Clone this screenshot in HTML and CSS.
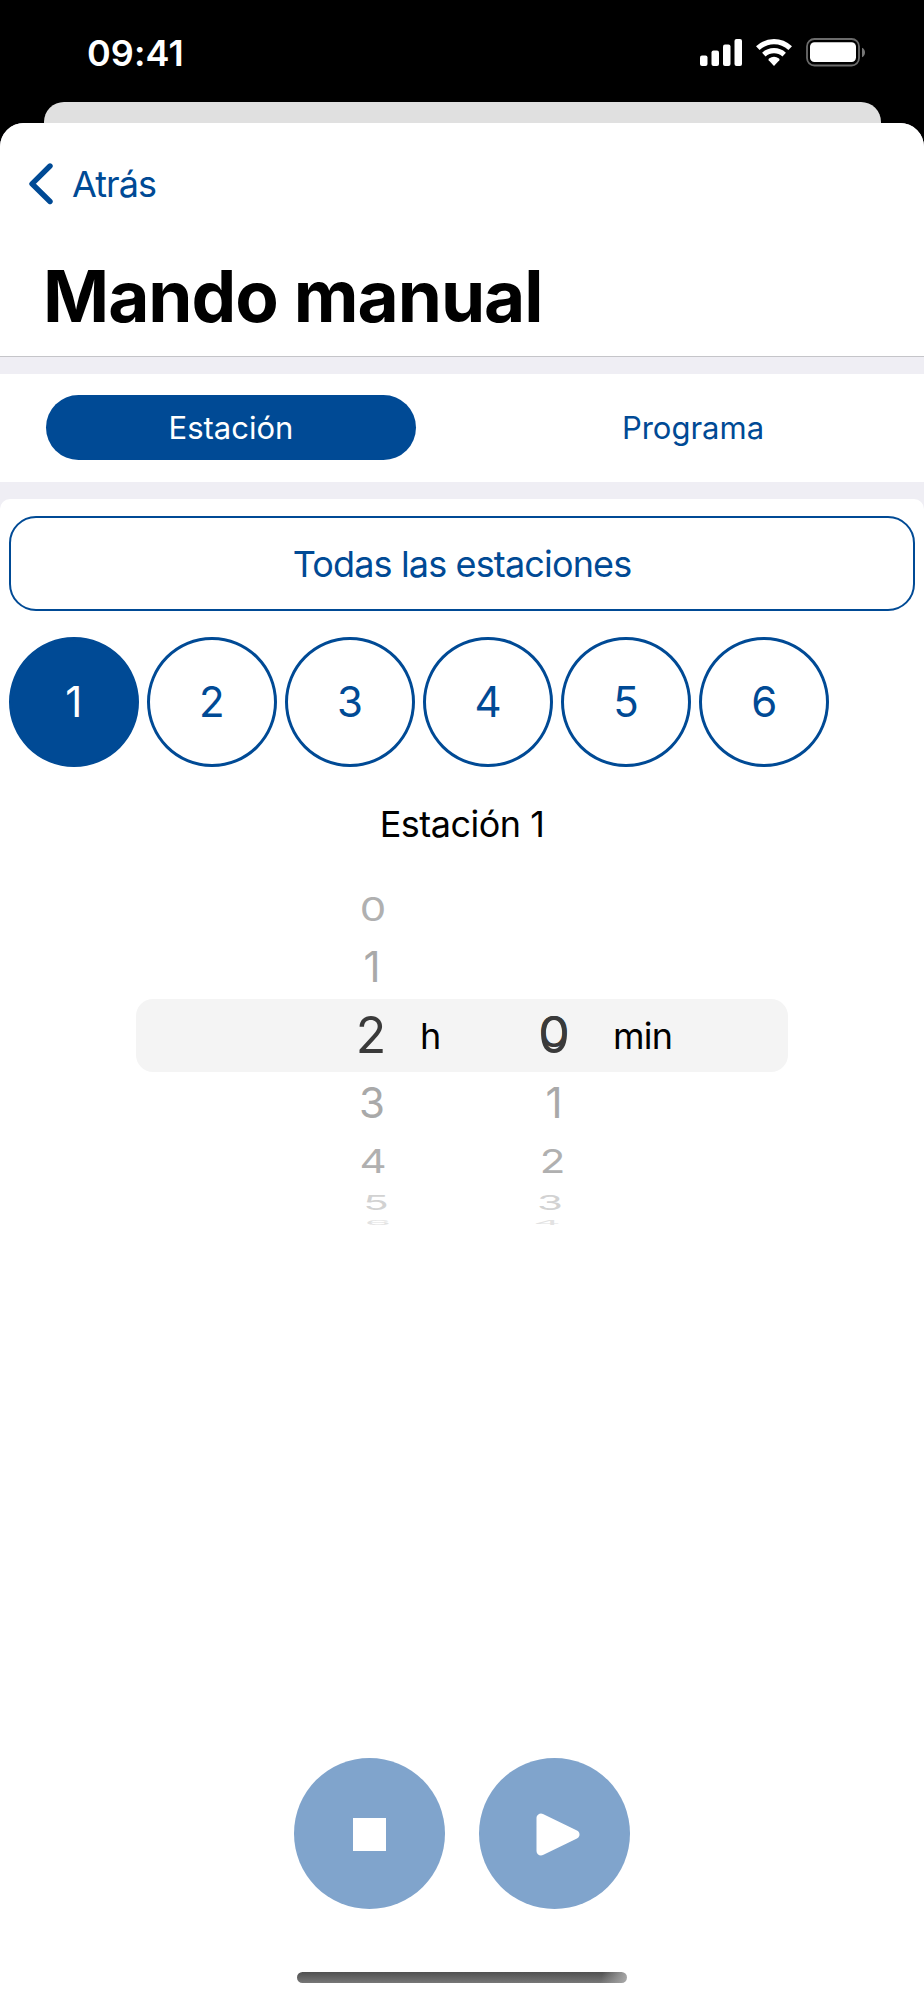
FILE: index.html
```html
<!DOCTYPE html>
<html lang="es">
<head>
  <meta charset="UTF-8">
  <title>Mando manual</title>
  <meta name="viewport" content="width=device-width, initial-scale=1.0">
  <link rel="stylesheet" href="styles.css">
</head>
<body>
  <div class="status-bar">
    <span class="time">09:41</span>
    <svg class="status-icons" width="168" height="32" viewBox="0 0 168 32">
      <g fill="#fff">
        <rect x="0" y="18.5" width="7.5" height="10.5" rx="2"/>
        <rect x="11.5" y="13.5" width="7.5" height="15.5" rx="2"/>
        <rect x="23" y="7.5" width="7.5" height="21.5" rx="2"/>
        <rect x="34.5" y="2" width="7.5" height="27" rx="2"/>
        <path d="M74 29l-5.3-5.8q-.7-.9.3-1.7 5-3.3 10 0 1 .8.3 1.7z"/>
      </g>
      <g fill="none" stroke="#fff" stroke-width="5.2">
        <path d="M57.8 11.2C67.2 2.4 80.8 2.4 90.2 11.2"/>
        <path d="M63.8 17.6C69.8 12.3 78.2 12.3 84.2 17.6"/>
      </g>
      <rect x="107" y="2" width="52" height="26.5" rx="7.5" fill="none" stroke="#6b6b6b" stroke-width="1.8"/>
      <rect x="110" y="5.3" width="46" height="19.7" rx="4.5" fill="#fff"/>
      <path d="M162 10.8q3 1.4 3 4.7t-3 4.7z" fill="#777"/>
    </svg>
  </div>

  <div class="back-sheet"></div>

  <div class="sheet">
    <div class="header">
      <a class="back" href="#">
        <svg width="26" height="42" viewBox="0 0 26 42">
          <path d="M22 3L4 20.8 22 38.5" fill="none" stroke="#004a95" stroke-width="5.4" stroke-linecap="round" stroke-linejoin="round"/>
        </svg>
        <span>Atrás</span>
      </a>
      <h1>Mando manual</h1>
    </div>

    <div class="tabs">
      <div class="tab"><button class="active">Estación</button></div>
      <div class="tab"><button>Programa</button></div>
    </div>

    <div class="panel">
      <button class="all-stations">Todas las estaciones</button>

      <div class="stations">
        <button class="station active">1</button>
        <button class="station">2</button>
        <button class="station">3</button>
        <button class="station">4</button>
        <button class="station">5</button>
        <button class="station">6</button>
      </div>

      <p class="station-name">Estación 1</p>

      <!-- Selector de duración -->
      <div class="picker">
        <div class="band"></div>
        <div class="wheel hours">
          <span class="far">0</span>
          <span class="near">1</span>
          <span class="selected">2</span>
          <span class="near">3</span>
          <span class="far">4</span>
          <span class="edge">5</span>
          <span class="last">6</span>
        </div>
        <span class="unit unit-h">h</span>
        <div class="wheel minutes">
          <span class="far"></span>
          <span class="near"></span>
          <span class="selected double"><i>0</i><i>0</i></span>
          <span class="near">1</span>
          <span class="far">2</span>
          <span class="edge">3</span>
          <span class="last">4</span>
        </div>
        <span class="unit unit-min">min</span>
      </div>

      <div class="controls">
        <button class="control" aria-label="Parar">
          <svg width="33" height="33" viewBox="0 0 33 33"><rect width="33" height="33" fill="#fff"/></svg>
        </button>
        <button class="control" aria-label="Iniciar">
          <svg class="play" width="44" height="43" viewBox="0 0 44 43">
            <path d="M5 5v33L39 21.5z" fill="#fff" stroke="#fff" stroke-width="9" stroke-linejoin="round"/>
          </svg>
        </button>
      </div>

      <div class="home-indicator"></div>
    </div>
  </div>
</body>
</html>
```
FILE: styles.css
```css
* {
  box-sizing: border-box;
}

body {
  margin: 0;
  height: 2000px;
  display: flex;
  flex-direction: column;
  font-family: Inter, "Liberation Sans", sans-serif;
  font-size: 36px;
  background: #000;
  color: #000;
  overflow: hidden;
}

button {
  font-family: inherit;
  padding: 0;
  border: none;
  background: none;
  color: #004a95;
  cursor: pointer;
}

.status-bar {
  height: 102px;
  padding: 0 56px 0 87px;
  display: flex;
  justify-content: space-between;
  align-items: flex-start;
  color: #fff;
}

.time {
  margin-top: 31px;
  font-size: 36px;
  line-height: 44px;
  font-weight: 600;
  letter-spacing: 0.1px;
}

.status-icons {
  margin-top: 37px;
}

.back-sheet {
  height: 21px;
  margin: 0 43.5px;
  border-radius: 20px 20px 0 0;
  background: #e0e0e0;
}

.sheet {
  flex: 1;
  display: flex;
  flex-direction: column;
  border-radius: 24px 24px 0 0;
  background: #efeef4;
  overflow: hidden;
}

.header {
  height: 234px;
  padding: 40px 28px 0;
  background: #fff;
  border-bottom: 1px solid #c5c5c9;
}

.back {
  display: flex;
  align-items: center;
  gap: 18px;
  height: 42px;
  color: #004a95;
  text-decoration: none;
  letter-spacing: -0.9px;
}

h1 {
  margin: 48px 0 0 15px;
  font-size: 71px;
  line-height: 86px;
  font-weight: 700;
  letter-spacing: -1px;
}

.tabs {
  margin-top: 17px;
  height: 108px;
  display: flex;
  background: #fff;
}

.tab {
  flex: 1;
  display: flex;
  justify-content: center;
  align-items: flex-start;
  padding-top: 21px;
}

.tab button {
  width: 370px;
  height: 65px;
  border-radius: 33px;
  font-size: 31px;
}

.tab .active {
  background: #004a95;
  color: #fff;
}

.panel {
  flex: 1;
  margin-top: 17px;
  padding: 17px 9px 0;
  display: flex;
  flex-direction: column;
  border-radius: 10px 10px 0 0;
  background: #fff;
}

.all-stations {
  height: 95px;
  border: 2px solid #004a95;
  border-radius: 27px;
  font-size: 36px;
  letter-spacing: -0.85px;
}

.stations {
  display: flex;
  gap: 8.6px;
  margin-top: 26px;
}

.station {
  width: 129.5px;
  height: 130px;
  padding-bottom: 1px;
  border: 3px solid #004a95;
  border-radius: 50%;
  font-size: 42px;
}

.station.active {
  background: #004a95;
  color: #fff;
}

.station-name {
  margin: 35px 0 0;
  line-height: 44px;
  text-align: center;
  letter-spacing: -0.5px;
}

.picker {
  width: 652px;
  margin: 34px auto 0;
  display: grid;
  grid-template-columns: 206px 60px 122px 60px 204px;
  grid-template-rows: 58px 58px 78px 58px 58px 25px 16px;
}

.band {
  grid-area: 3 / 1 / 4 / -1;
  height: 73px;
  align-self: center;
  border-radius: 17px;
  background: #f4f4f4;
}

.wheel {
  display: flex;
  flex-direction: column;
  text-align: center;
  font-size: 42px;
  color: #a9a9a9;
}

.hours {
  grid-area: 1 / 2 / -1 / 3;
}

.minutes {
  grid-area: 1 / 4 / -1 / 5;
}

.near {
  height: 58px;
  line-height: 58px;
}

.far {
  height: 58px;
  line-height: 58px;
  transform: translateX(1px) scaleY(0.79);
  color: #b0b0b0;
}

.selected {
  height: 78px;
  font-size: 50px;
  line-height: 78px;
  transform: translateX(-1px);
  color: #3a3a3a;
}

.edge {
  height: 25px;
  line-height: 25px;
  transform: translateX(4px) scaleY(0.49);
  color: #d2d2d2;
}

.last {
  height: 16px;
  line-height: 16px;
  transform: translateX(6px) scaleY(0.16);
  color: #e2e2e2;
}

.minutes .far {
  transform: translateX(-1.5px) scaleY(0.79);
}

.minutes .selected {
  transform: none;
}

.minutes .edge {
  transform: translateX(-4px) scaleY(0.49);
}

.minutes .last {
  transform: translateX(-7px) scaleY(0.16);
}

/* dos ceros superpuestos en la misma celda */
.double {
  display: grid;
}

.double i {
  grid-area: 1 / 1;
  font-style: normal;
}

.double i + i {
  transform: translateY(-3px) scaleY(0.85);
}

.unit {
  line-height: 80px;
}

.unit-h {
  grid-area: 3 / 3;
  padding-left: 18px;
}

.unit-min {
  grid-area: 3 / 5;
  padding-left: 29px;
  letter-spacing: -0.8px;
}

.controls {
  margin-top: auto;
  display: flex;
  justify-content: center;
  gap: 34px;
}

.control {
  width: 151px;
  height: 151px;
  display: flex;
  justify-content: center;
  align-items: center;
  border-radius: 50%;
  background: #80a4cc;
}

.control svg {
  margin-top: 2px;
}

.play {
  margin-left: 7px;
}

.home-indicator {
  width: 330px;
  height: 11px;
  margin: 63px auto 17px;
  border-radius: 6px;
  background: linear-gradient(100deg, transparent 92%, #aaa 100%), linear-gradient(#505050, #777);
}
```
